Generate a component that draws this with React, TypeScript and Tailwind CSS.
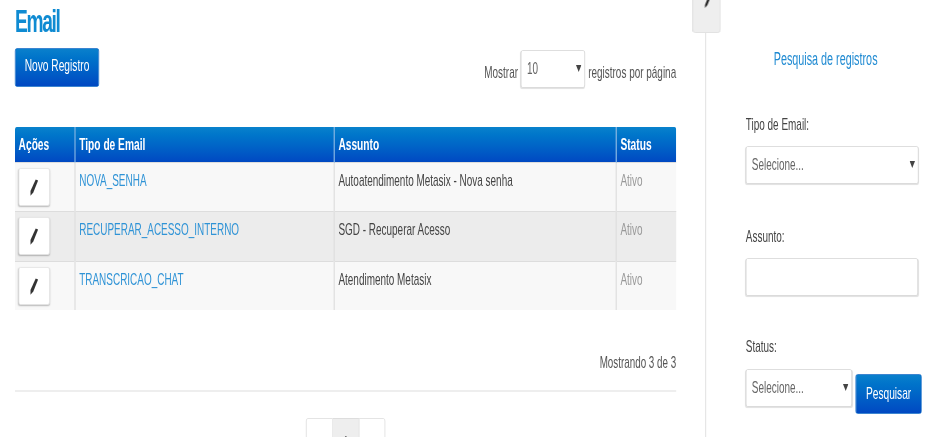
const rows = [
  { tipo: 'NOVA_SENHA', assunto: 'Autoatendimento Metasix - Nova senha', height: 'h-[49px]', bg: 'bg-[#f8f8f8]' },
  { tipo: 'RECUPERAR_ACESSO_INTERNO', assunto: 'SGD - Recuperar Acesso', height: 'h-[50px]', bg: 'bg-[#ececec]' },
  { tipo: 'TRANSCRICAO_CHAT', assunto: 'Atendimento Metasix', height: 'h-[49px]', bg: 'bg-[#f8f8f8]' },
];

function Pencil() {
  return (
    <svg width="14" height="17" viewBox="0 0 14 17" fill="none">
      <path d="M9.5 0.5 L13.5 1.5 L5.5 13.5 L0.8 16.8 L0.8 12 Z" fill="#333" />
    </svg>
  );
}

function Field({ label, className, children }: { label: string; className: string; children: React.ReactNode }) {
  return (
    <div className={className}>
      <label className="block text-[16.6px] leading-[20px] text-[#444]">{label}</label>
      {children}
    </div>
  );
}

function Select({ value, className }: { value: string; className: string }) {
  return (
    <div className={`relative ${className}`}>
      <select className="block h-[38px] w-full appearance-none rounded-[3px] border border-[#d6d6d6] bg-white pl-[9px] text-[16.6px] text-[#666] shadow-[0_1px_1px_rgba(0,0,0,0.12)]">
        <option>{value}</option>
      </select>
      <svg className="absolute right-[6px] top-[15px]" width="9" height="7" viewBox="0 0 9 7">
        <path d="M0 0 H9 L4.5 7 Z" fill="#444" />
      </svg>
    </div>
  );
}

export default function App() {
  return (
    <div className="h-[437px] overflow-hidden bg-white">
      {/* the whole page is squeezed horizontally like the screenshot */}
      <div className="flex h-[437px] w-[1555px] origin-top-left scale-x-[0.6] font-['Liberation_Sans',Arial,sans-serif]">
        <main className="ml-[25px] w-[1102px] shrink-0">
          <h1 className="h-[40px] pt-[2px] text-[32px] font-bold leading-[38px] tracking-[-0.07em] text-[#0f8bd2]">Email</h1>

          <div className="mt-[8px] flex h-[40px] items-start justify-between">
            <button className="h-[39px] w-[140px] rounded-[3px] border border-[#0a66c4] bg-gradient-to-b from-[#0a80cc] to-[#0048c2] pb-[3px] text-[17px] text-white">
              Novo Registro
            </button>
            <div className="flex items-start text-[16.6px] text-[#555]">
              <span className="mt-[15px] leading-[20px]">Mostrar</span>
              <Select value="10" className="mx-[5px] mt-[2px] w-[107px]" />
              <span className="mt-[15px] leading-[20px]">registros por página</span>
            </div>
          </div>

          <table className="mt-[39px] w-[1102px] table-fixed border-collapse text-[16.6px]">
            <colgroup>
              <col className="w-[100px]" />
              <col className="w-[432px]" />
              <col className="w-[470px]" />
              <col className="w-[100px]" />
            </colgroup>
            <thead>
              <tr className="h-[35px] bg-gradient-to-b from-[#0a82cc] to-[#0048c2] text-left text-[17px] text-white">
                <th className="rounded-tl-[3px] pl-[6px] font-bold">Ações</th>
                <th className="border-l-2 border-[#7fb2e2] pl-[6px] font-bold">Tipo de Email</th>
                <th className="border-l-2 border-[#7fb2e2] pl-[6px] font-bold">Assunto</th>
                <th className="rounded-tr-[3px] border-l-2 border-[#7fb2e2] pl-[6px] font-bold">Status</th>
              </tr>
            </thead>
            <tbody>
              {rows.map((row) => (
                <tr key={row.tipo} className={`${row.height} ${row.bg} border-t border-[#ddd] align-top`}>
                  <td className="pl-[6px] pt-[5px]">
                    <button className="flex h-[38px] w-[52px] items-center justify-center rounded-[3px] border border-[#e4e4e4] bg-white pt-[1px] shadow-[0_1px_2px_rgba(0,0,0,0.25)]">
                      <Pencil />
                    </button>
                  </td>
                  <td className="border-l-2 border-[#dedede] pl-[6px] pt-[7px] leading-[22px] text-[#2f93d6]">{row.tipo}</td>
                  <td className="border-l-2 border-[#dedede] pl-[6px] pt-[7px] leading-[22px] text-[#444]">{row.assunto}</td>
                  <td className="border-l-2 border-[#dedede] pl-[6px] pt-[7px] leading-[22px] text-[#999]">Ativo</td>
                </tr>
              ))}
            </tbody>
          </table>

          <p className="mt-[41px] text-right text-[16.4px] leading-[22px] text-[#555]">Mostrando 3 de 3</p>
          <hr className="mt-[17px] border-t-2 border-[#eee]" />

          <div className="ml-[485px] mt-[26px] flex h-[40px] text-[17px] text-[#555]">
            <span className="w-[45px] rounded-l-[3px] border border-[#ddd] bg-white" />
            <span className="w-[43px] border-y border-[#ddd] bg-[#eee] pt-[11px] text-center">1</span>
            <span className="w-[44px] rounded-r-[3px] border border-[#ddd] bg-white" />
          </div>
        </main>

        <aside className="relative ml-[48px] mt-[33px] h-[404px] w-[380px] border-l-2 border-[#e6e6e6] pl-[66px]">
          {/* collapse handle */}
          <div className="absolute left-[-23px] top-[-43px] flex h-[43px] w-[47px] items-start justify-center rounded-b-[4px] border border-[#ddd] bg-[#eee] pt-[9px]">
            <svg width="10" height="8" viewBox="0 0 10 8">
              <path d="M6 -1 L10 -1 L6 5 L2 8 L2 5 Z" fill="#222" />
            </svg>
          </div>

          <h2 className="mt-[15px] w-[266px] text-center text-[18px] font-normal leading-[22px] text-[#1f8ad2]">Pesquisa de registros</h2>

          <Field label="Tipo de Email:" className="mt-[45px]">
            <Select value="Selecione..." className="mt-[11px] w-[288px]" />
          </Field>

          <Field label="Assunto:" className="mt-[43px]">
            <input className="mt-[11px] block h-[38px] w-[287px] rounded-[3px] border border-[#d6d6d6] bg-white shadow-[0_1px_1px_rgba(0,0,0,0.12)]" />
          </Field>

          <Field label="Status:" className="mt-[41px]">
            <div className="mt-[12px] flex items-start">
              <Select value="Selecione..." className="w-[177px]" />
              <button className="ml-[6px] mt-[5px] h-[40px] w-[110px] rounded-[3px] border border-[#0a66c4] bg-gradient-to-b from-[#0a80cc] to-[#0048c2] text-[17px] text-white">
                Pesquisar
              </button>
            </div>
          </Field>
        </aside>
      </div>
    </div>
  );
}
